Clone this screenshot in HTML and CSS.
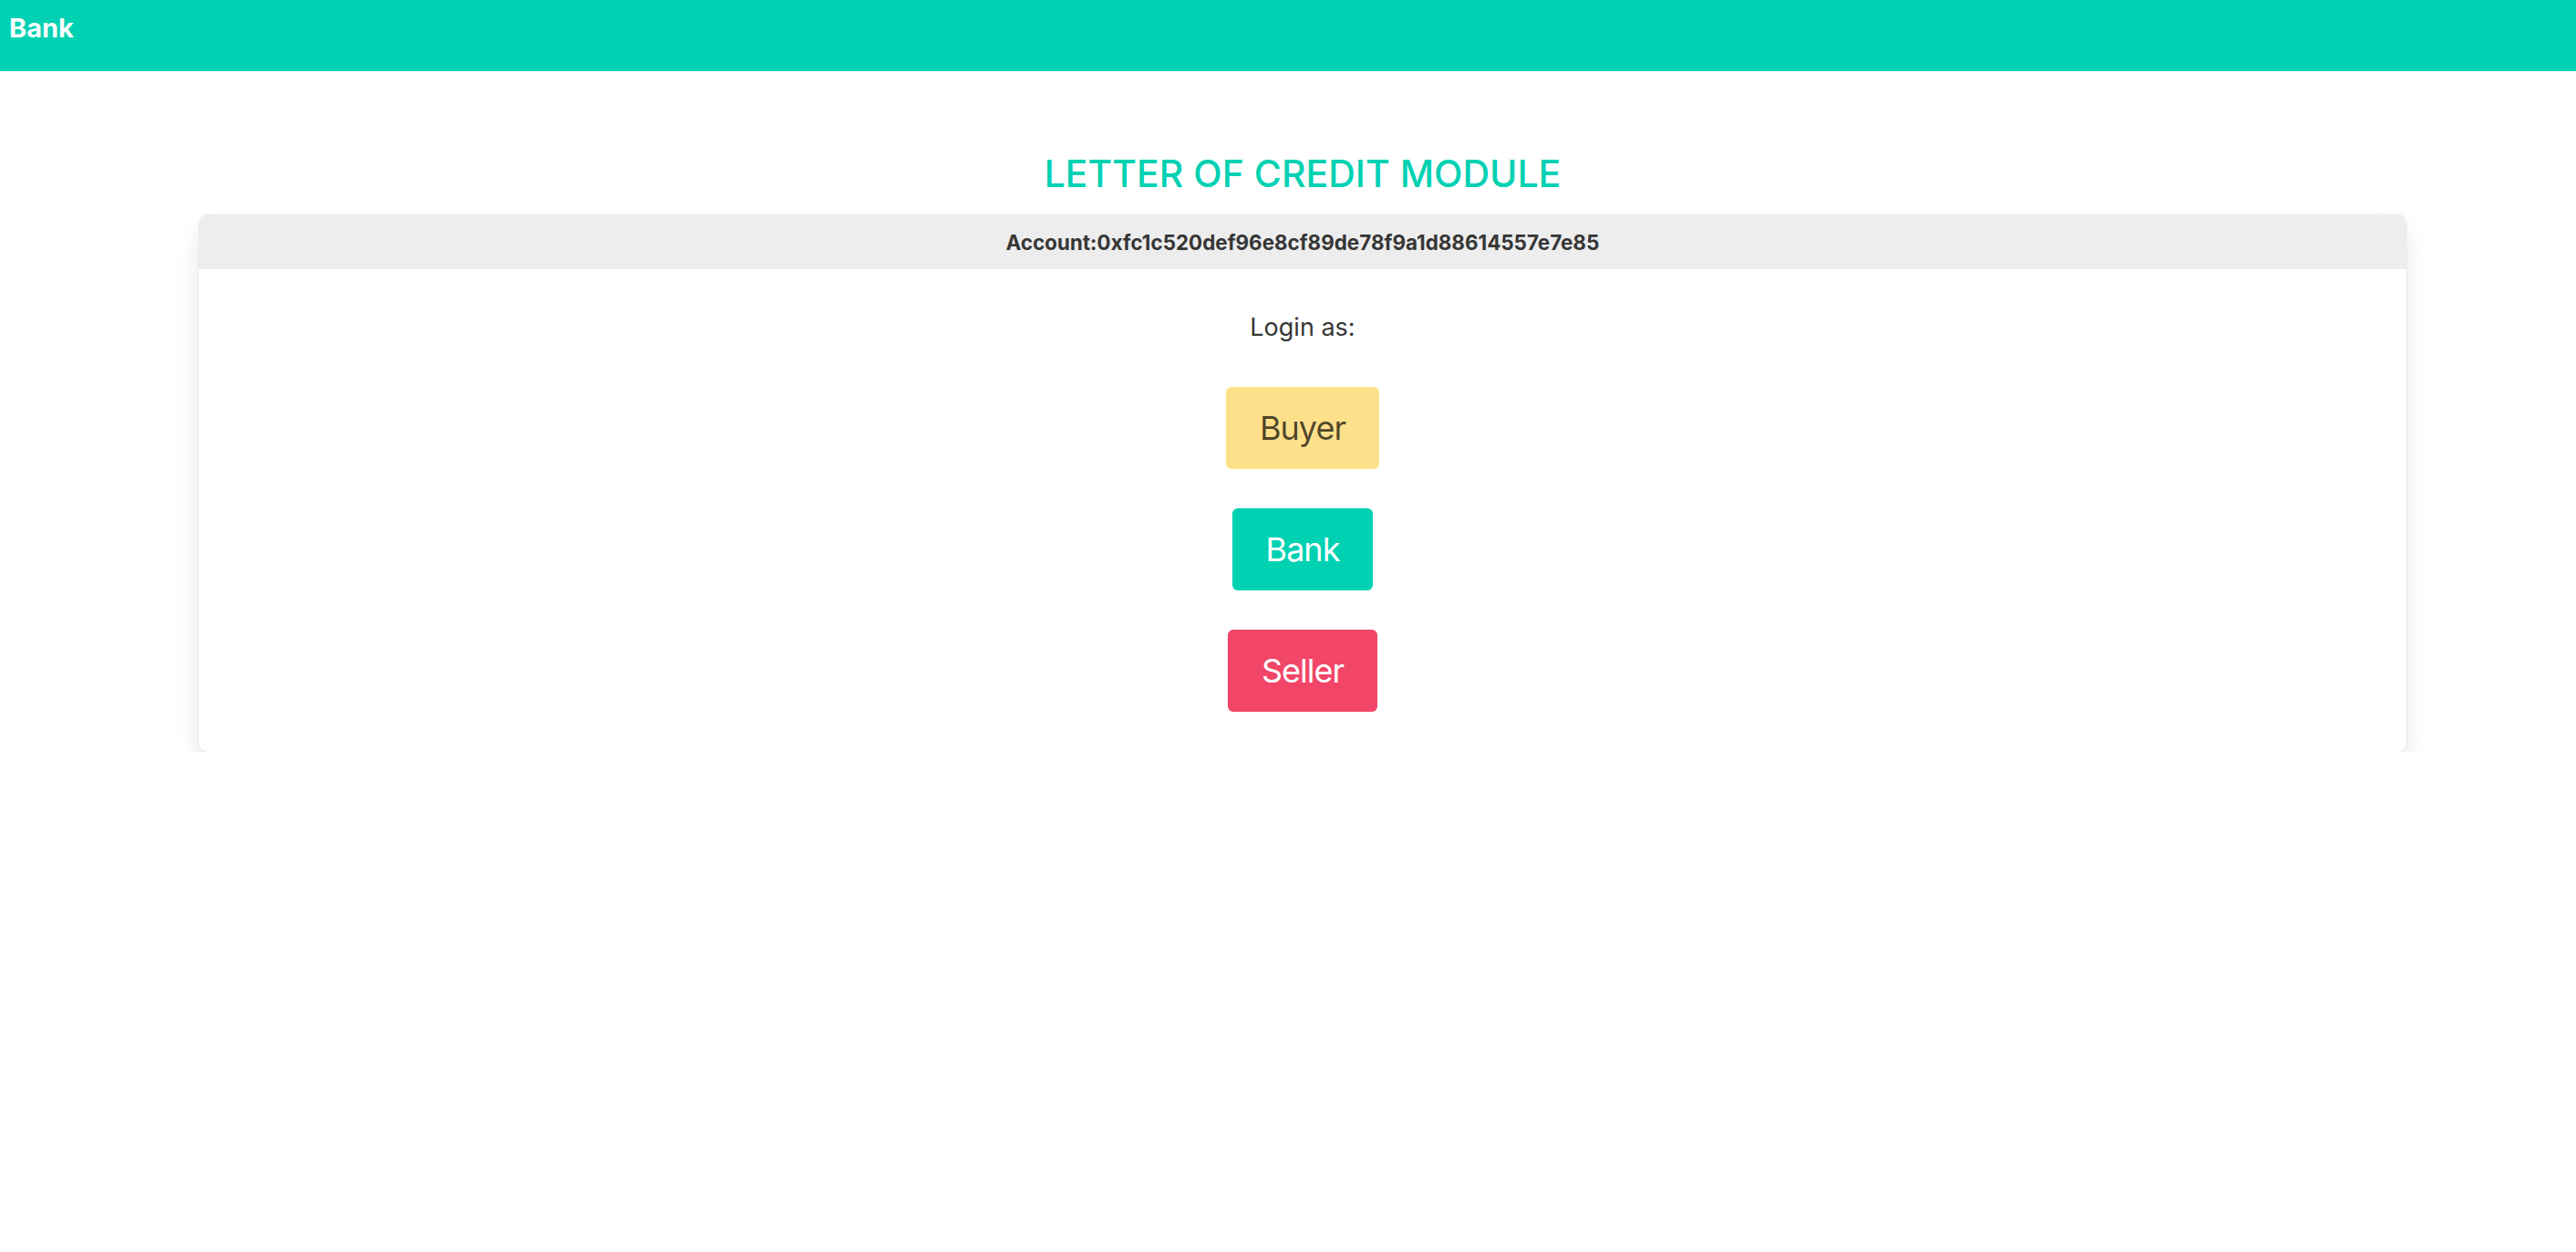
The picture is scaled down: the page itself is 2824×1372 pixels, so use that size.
FILE: index.html
```html
<!DOCTYPE html>
<html lang="en">
<head>
<meta charset="utf-8">
<title>Letter of Credit Module</title>
<link rel="stylesheet" href="styles.css">
</head>
<body>
<nav class="navbar">
  <span class="brand">Bank</span>
</nav>
<main class="main">
  <h1 class="title">LETTER OF CREDIT MODULE</h1>
  <section class="card">
    <header class="card-header">Account:0xfc1c520def96e8cf89de78f9a1d88614557e7e85</header>
    <div class="card-body">
      <p class="login-label">Login as:</p>
      <button class="btn btn-buyer" type="button">Buyer</button>
      <button class="btn btn-bank" type="button">Bank</button>
      <button class="btn btn-seller" type="button">Seller</button>
    </div>
  </section>
</main>
</body>
</html>
```

FILE: styles.css
```css
* { box-sizing: border-box; }
html, body { margin: 0; padding: 0; background: #ffffff; }
body {
  font-family: Inter, "Noto Sans", "Liberation Sans", sans-serif;
  color: #363636;
}
.navbar {
  height: 78px;
  background: #00d1b2;
  padding: 8px 0 0 10px;
}
.brand {
  display: block;
  color: #ffffff;
  font-weight: 700;
  font-size: 29px;
  line-height: 45px;
}
.main {
  padding: 88px 186px 0 218px;
}
.title {
  margin: 0 0 21px 0;
  text-align: center;
  color: #00d1b2;
  font-weight: 500;
  font-size: 41px;
  line-height: 48px;
}
.card {
  background: #ffffff;
  border-radius: 10px;
  box-shadow: 0 14px 28px -3px rgba(10, 10, 10, 0.12), 0 0 0 1px rgba(10, 10, 10, 0.03);
}
.card-header {
  height: 60px;
  display: flex;
  align-items: center;
  justify-content: center;
  background: #ededed;
  border-radius: 10px 10px 0 0;
  font-weight: 700;
  font-size: 22.4px;
  color: #363636;
}
.card-body {
  display: flex;
  flex-direction: column;
  align-items: center;
  gap: 43px;
  padding: 44px 0 44px;
}
.login-label {
  margin: 0 0 2px 0;
  font-size: 27px;
  line-height: 40px;
  color: #363636;
}
.btn {
  height: 90px;
  padding: 0 36px;
  border: 1px solid transparent;
  border-radius: 6px;
  font-family: inherit;
  font-size: 36px;
  letter-spacing: -1px;
  line-height: 1;
  cursor: pointer;
}
.btn-buyer { background: #ffe08a; color: rgba(0, 0, 0, 0.7); }
.btn-bank { background: #00d1b2; color: #ffffff; }
.btn-seller { background: #f14668; color: #ffffff; }
```
